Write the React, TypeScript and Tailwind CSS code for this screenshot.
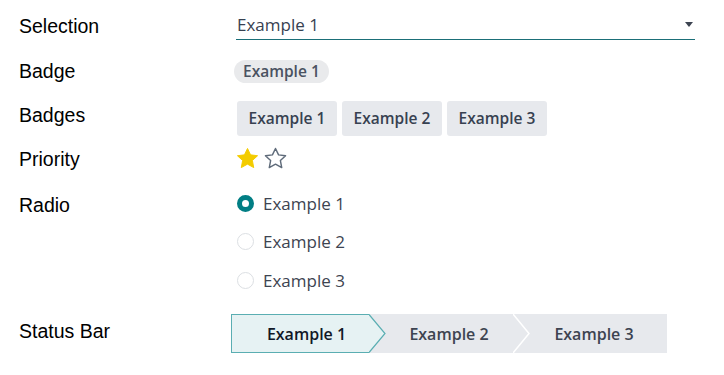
import * as React from "react"

const labelFont = { fontFamily: '"Liberation Sans", Arial, sans-serif' }
const valueFont = { fontFamily: '"Open Sans", "Noto Sans", sans-serif' }

const Star = ({ filled }: { filled: boolean }) => (
  <svg width="23" height="23" viewBox="0 0 24 24">
    <polygon
      points="12,1.5 15.2,8.2 22.5,9.1 17.1,14.1 18.5,21.5 12,17.9 5.5,21.5 6.9,14.1 1.5,9.1 8.8,8.2"
      fill={filled ? "#f3cc00" : "none"}
      stroke={filled ? "#f3cc00" : "#5f6b7a"}
      strokeWidth={filled ? 1 : 1.5}
      strokeLinejoin="round"
    />
  </svg>
)

const Label = ({ children, mt }: { children: React.ReactNode; mt: string }) => (
  <div
    className={`w-[236px] shrink-0 pl-[19px] text-[19.5px] leading-[24px] text-black ${mt}`}
    style={labelFont}
  >
    {children}
  </div>
)

export default function App() {
  const radios = ["Example 1", "Example 2", "Example 3"]

  return (
    <div className="h-[375px] w-[724px] bg-white" style={valueFont}>
      {/* Selection */}
      <div className="flex h-[48px] items-start">
        <Label mt="mt-[14px]">Selection</Label>
        <div className="mt-[10px] flex h-[30px] w-[459px] items-center justify-between border-b border-[#1b6f78] pl-[1px] pr-[1px]">
          <span className="text-[17px] text-[#374151]">Example 1</span>
          <span className="mr-[1px] h-0 w-0 border-x-[4.5px] border-t-[5px] border-x-transparent border-t-[#3d4451]" />
        </div>
      </div>

      {/* Badge */}
      <div className="flex h-[44px] items-start">
        <Label mt="mt-[11px]">Badge</Label>
        <div className="-ml-[2px] mt-[12px] flex h-[23px] items-center rounded-full bg-[#e9eaec] px-[9px] text-[15.5px] font-semibold text-[#4a5261]">
          Example 1
        </div>
      </div>

      {/* Badges */}
      <div className="flex h-[48px] items-start">
        <Label mt="mt-[11px]">Badges</Label>
        <div className="ml-[1px] mt-[9px] flex gap-[5px]">
          {["Example 1", "Example 2", "Example 3"].map((b) => (
            <div
              key={b}
              className="flex h-[35px] w-[100px] items-center justify-center rounded-[3px] bg-[#e7e9ed] text-[15.5px] font-semibold text-[#374151]"
            >
              {b}
            </div>
          ))}
        </div>
      </div>

      {/* Priority */}
      <div className="flex h-[42px] items-start">
        <Label mt="mt-[7px]">Priority</Label>
        <div className="mt-[7px] flex gap-[5px]">
          <Star filled />
          <Star filled={false} />
        </div>
      </div>

      {/* Radio */}
      <div className="flex h-[118px] items-start">
        <Label mt="mt-[11px]">Radio</Label>
        <div className="ml-[1px] mt-[2px] flex flex-col">
          {radios.map((r, i) => (
            <div key={r} className="flex h-[38.5px] items-center gap-[9px]">
              {i === 0 ? (
                <span className="h-[17px] w-[17px] rounded-full border-[5px] border-[#017e84] bg-white" />
              ) : (
                <span className="h-[17px] w-[17px] rounded-full border border-[#dcdfe3] bg-white" />
              )}
              <span className="text-[17px] text-[#3d4451]">{r}</span>
            </div>
          ))}
        </div>
      </div>

      {/* Status Bar */}
      <div className="flex items-start">
        <Label mt="mt-[19px]">Status Bar</Label>
        <div className="-ml-[5px] mt-[14px] flex h-[39px] w-[436px] bg-[#e7e9ed] text-[16px] font-semibold">
          <div className="relative z-10 flex h-full w-[138px] items-center justify-center border-y border-l border-[#5aaeb2] bg-[#e6f2f3] pl-[12px] text-[#111827]">
            Example 1
            <svg
              className="absolute left-full top-[-1px]"
              width="17"
              height="39"
              viewBox="0 0 17 39"
            >
              <polygon points="0,0.5 16,19.5 0,38.5" fill="#e6f2f3" />
              <polyline points="0,0.5 16,19.5 0,38.5" fill="none" stroke="#5aaeb2" strokeWidth="1.2" />
            </svg>
          </div>
          <div className="relative flex h-full w-[144px] items-center justify-center pl-[16px] text-[#3d4451]">
            Example 2
            <svg
              className="absolute left-full top-0"
              width="17"
              height="39"
              viewBox="0 0 17 39"
            >
              <polyline points="0,0 16,19.5 0,39" fill="none" stroke="#ffffff" strokeWidth="1.5" />
            </svg>
          </div>
          <div className="flex h-full w-[154px] items-center justify-center pl-[8px] text-[#3d4451]">
            Example 3
          </div>
        </div>
      </div>
    </div>
  )
}
